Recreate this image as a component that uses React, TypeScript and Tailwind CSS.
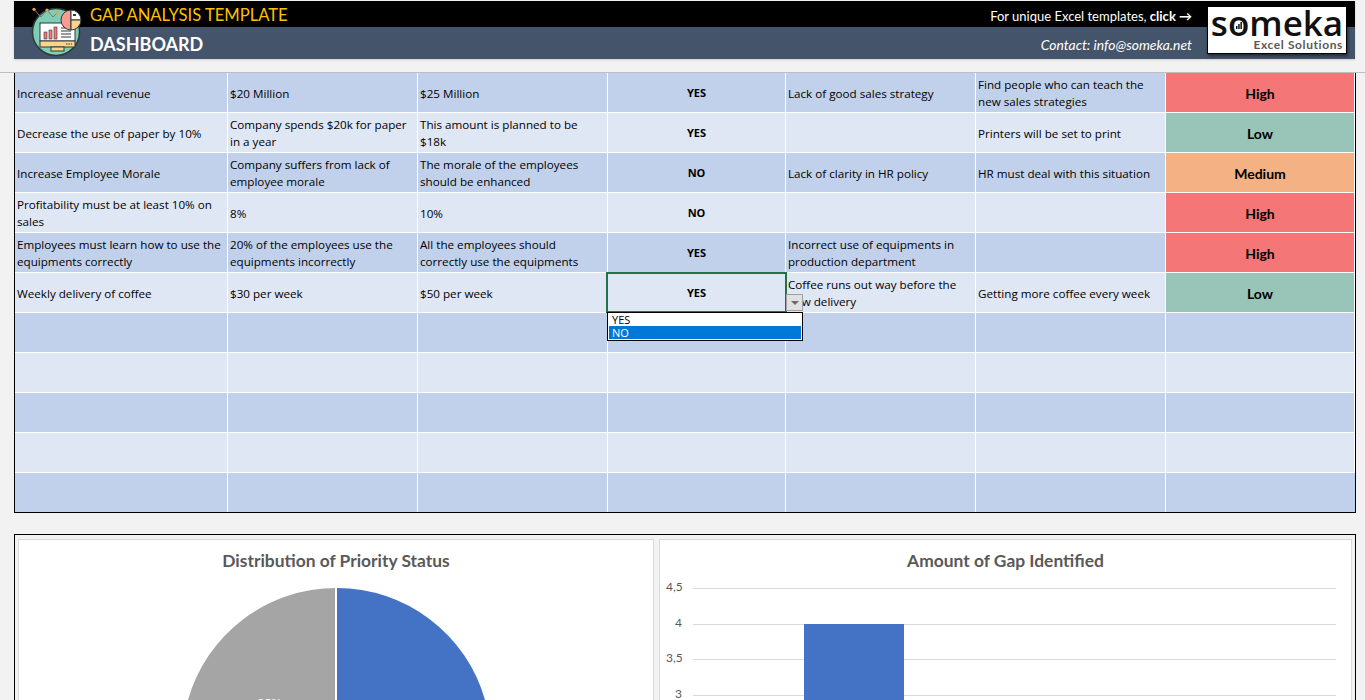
const rows: [string, string, string, string, string, string, string][] = [
  ["Increase annual revenue", "$20 Million", "$25 Million", "YES", "Lack of good sales strategy", "Find people who can teach the new sales strategies", "High"],
  ["Decrease the use of paper by 10%", "Company spends $20k for paper in a year", "This amount is planned to be $18k", "YES", "", "Printers will be set to print", "Low"],
  ["Increase Employee Morale", "Company suffers from lack of employee morale", "The morale of the employees should be enhanced", "NO", "Lack of clarity in HR policy", "HR must deal with this situation", "Medium"],
  ["Profitability must be at least 10% on sales", "8%", "10%", "NO", "", "", "High"],
  ["Employees must learn how to use the equipments correctly", "20% of the employees use the equipments incorrectly", "All the employees should correctly use the equipments", "YES", "Incorrect use of equipments in production department", "", "High"],
  ["Weekly delivery of coffee", "$30 per week", "$50 per week", "YES", "Coffee runs out way before the new delivery", "Getting more coffee every week", "Low"],
  ["", "", "", "", "", "", ""],
  ["", "", "", "", "", "", ""],
  ["", "", "", "", "", "", ""],
  ["", "", "", "", "", "", ""],
  ["", "", "", "", "", "", ""],
];

const priority: Record<string, string> = {
  High: "bg-[#f47676]",
  Low: "bg-[#99c5b9]",
  Medium: "bg-[#f4b183]",
};

function Logo() {
  return (
    <svg width="52" height="52" viewBox="0 0 52 52" className="absolute left-[31px] top-[6px]">
      <circle cx="25" cy="26" r="23.5" fill="#7fcdb5" stroke="#2f3a3a" strokeWidth="1.5" />
      <path d="M3 3.3 L10 11 L16 4 L22 11 L26 7" fill="none" stroke="#7a7a7a" strokeWidth="1" />
      <circle cx="3" cy="3.3" r="1.6" fill="#e9a04b" />
      <circle cx="16" cy="4" r="1.6" fill="#e9a04b" />
      <circle cx="26" cy="7" r="1.6" fill="#e9a04b" />
      <rect x="9" y="17" width="35" height="18" fill="#ffffff" stroke="#2f3a3a" />
      <rect x="9" y="35" width="35" height="6" fill="#f9d48a" stroke="#2f3a3a" />
      <rect x="20" y="41" width="13" height="4" fill="#f9d48a" stroke="#2f3a3a" />
      <path d="M35 38h6" stroke="#2f3a3a" strokeWidth="1" strokeDasharray="1.5 1" />
      <rect x="13" y="26" width="3" height="7" fill="#f47676" stroke="#2f3a3a" strokeWidth=".6" />
      <rect x="18" y="24" width="3" height="9" fill="#f47676" stroke="#2f3a3a" strokeWidth=".6" />
      <rect x="23" y="21" width="3" height="12" fill="#f47676" stroke="#2f3a3a" strokeWidth=".6" />
      <path d="M30 22h10M30 25h10M30 28h10M30 31h10" stroke="#2f3a3a" strokeWidth="1.2" />
      <path d="M40 4 A10 10 0 0 0 40 24 Z" fill="#fb9b8f" stroke="#2f3a3a" />
      <path d="M40 4 A10 10 0 0 1 50 14 L40 14 Z" fill="#ffffff" stroke="#2f3a3a" />
      <path d="M40 14 L50 14 A10 10 0 0 1 40 24 Z" fill="#f9d48a" stroke="#2f3a3a" />
      <rect x="42" y="8" width="3" height="2" fill="#2f3a3a" />
    </svg>
  );
}

function Cell({ text, i }: { text: string; i: number }) {
  if (i === 3) {
    return <div className="flex items-center justify-center pt-[2px] text-[11px] font-bold">{text}</div>;
  }
  if (i === 6) {
    return (
      <div className={`flex items-center justify-center pt-[2px] text-[14px] font-bold font-['Lato','Liberation_Sans',sans-serif] ${priority[text] ?? ""}`}>
        {text}
      </div>
    );
  }
  return <div className="flex items-center pl-[2px] pr-[2px] pt-px leading-[17px]">{text}</div>;
}

export default function App() {
  return (
    <div className="relative h-[700px] w-[1365px] overflow-hidden bg-[#f2f2f2] font-['Open_Sans','Noto_Sans',sans-serif] text-[11.65px] text-black">
      <div className="pt-px pl-[14px] pr-[10px]">
        <div className="relative h-[58px] w-[1341px] shadow-[0_1px_2px_rgba(0,0,0,0.15)]">
          <div className="flex h-[26px] items-center justify-between bg-black pl-[76px] pr-[163px] text-white">
            <span className="pt-[3px] font-['Lato','Liberation_Sans',sans-serif] text-[16.6px] text-[#ffc000]">GAP ANALYSIS TEMPLATE</span>
            <span className="pt-[5px] font-['Lato','Liberation_Sans',sans-serif] text-[13px]">
              For unique Excel templates, <b>click →</b>
            </span>
          </div>
          <div className="flex h-[32px] items-center justify-between bg-[#44546a] pl-[76px] pr-[163px] text-white">
            <span className="pt-[2px] font-['Lato','Liberation_Sans',sans-serif] text-[18px] font-bold">DASHBOARD</span>
            <span className="pt-[5px] font-['Lato','Liberation_Sans',sans-serif] text-[13.9px] italic">Contact: info@someka.net</span>
          </div>
          <div className="absolute right-[8px] top-[5px] flex h-[48px] w-[140px] flex-col items-center border border-black bg-white shadow-[1px_2px_3px_rgba(0,0,0,0.5)]">
            <span className="relative h-[31px] text-[35px] font-semibold leading-[32px] text-[#111]">
              someka
              <svg width="8" height="8" viewBox="0 0 8 8" className="absolute left-[24px] top-[14px]">
                <rect x="1" y="5" width="1.5" height="3" fill="#111" />
                <rect x="3.2" y="3" width="1.5" height="5" fill="#111" />
                <rect x="5.4" y="1" width="1.5" height="7" fill="#111" />
              </svg>
            </span>
            <span className="w-full pr-[3px] text-right font-['Lato','Liberation_Sans',sans-serif] text-[12px] font-bold leading-[14px] tracking-[0.6px] text-[#595959]">Excel Solutions</span>
          </div>
        </div>
      </div>
      <Logo />

      <div className="mt-[13px] h-px bg-[#bfbfbf]" />

      <div className="relative ml-[14px] w-[1342px] border-x border-b border-black">
        <div className="grid grid-cols-[213px_190px_190px_178px_190px_190px_189px]">
          {rows.map((row, r) =>
            row.map((text, i) => (
              <div
                key={`${r}-${i}`}
                className={`grid border-r border-white last:border-r-0 ${r === 10 ? "h-[39px]" : "h-[40px] border-b"} ${r % 2 === 0 ? "bg-[#c1d1eb]" : "bg-[#dfe6f4]"}`}
              >
                <Cell text={text} i={i} />
              </div>
            )),
          )}
        </div>

        <div className="absolute left-[591px] top-[199px] h-[41px] w-[181px] border-2 border-[#217346]" />
        <div className="absolute left-[771px] top-[221px] flex h-[17px] w-[17px] items-center justify-center border border-[#a0a0a0] bg-[#e1e1e1]">
          <div className="h-0 w-0 border-x-[4px] border-t-[4px] border-x-transparent border-t-[#6d6d6d]" />
        </div>
        <div className="absolute left-[592px] top-[239px] w-[196px] border border-black bg-white px-px pb-px text-[11px] leading-[13px]">
          <div className="pl-[3px]">YES</div>
          <div className="bg-[#0078d7] pl-[3px] text-white">NO</div>
        </div>
      </div>

      <div className="ml-[14px] mt-[21px] flex h-[200px] w-[1342px] gap-[5px] border border-b-0 border-black bg-[#f2f2f2] pl-[3px] pt-[4px] font-['Lato','Liberation_Sans',sans-serif]">
        <div className="h-[200px] w-[636px] border border-[#d9d9d9] bg-white">
          <div className="pt-[8px] text-center text-[17.4px] font-bold leading-[26px] text-[#595959]">Distribution of Priority Status</div>
          <svg width="634" height="120" viewBox="0 0 634 120" className="mt-[14px] block">
            <path d="M317 0 A154 154 0 0 0 169 112 L169 120 L317 120 Z" fill="#a5a5a5" />
            <path d="M318 0 A154 154 0 0 1 466 112 L466 120 L318 120 Z" fill="#4472c4" />
            <rect x="316" y="0" width="2" height="120" fill="#ffffff" />
            <text x="250" y="118.5" textAnchor="middle" fontSize="12" fill="#ffffff">25%</text>
          </svg>
        </div>
        <div className="h-[200px] w-[693px] border border-[#d9d9d9] bg-white">
          <div className="pt-[8px] text-center text-[17.4px] font-bold leading-[26px] text-[#595959]">Amount of Gap Identified</div>
          <div className="relative mt-[14px] flex flex-col gap-[34.5px] pl-[6px] pr-[15px] text-[12px] text-[#595959]">
            {["4,5", "4", "3,5", "3"].map((t) => (
              <div key={t} className="flex h-px items-center gap-[11px]">
                <span className="mb-[3px] w-[16px] text-right">{t}</span>
                <div className="h-px flex-1 bg-[#d9d9d9]" />
              </div>
            ))}
            <div className="absolute left-[144px] top-[36px] h-[100px] w-[100px] bg-[#4472c4]" />
          </div>
        </div>
      </div>
    </div>
  );
}
